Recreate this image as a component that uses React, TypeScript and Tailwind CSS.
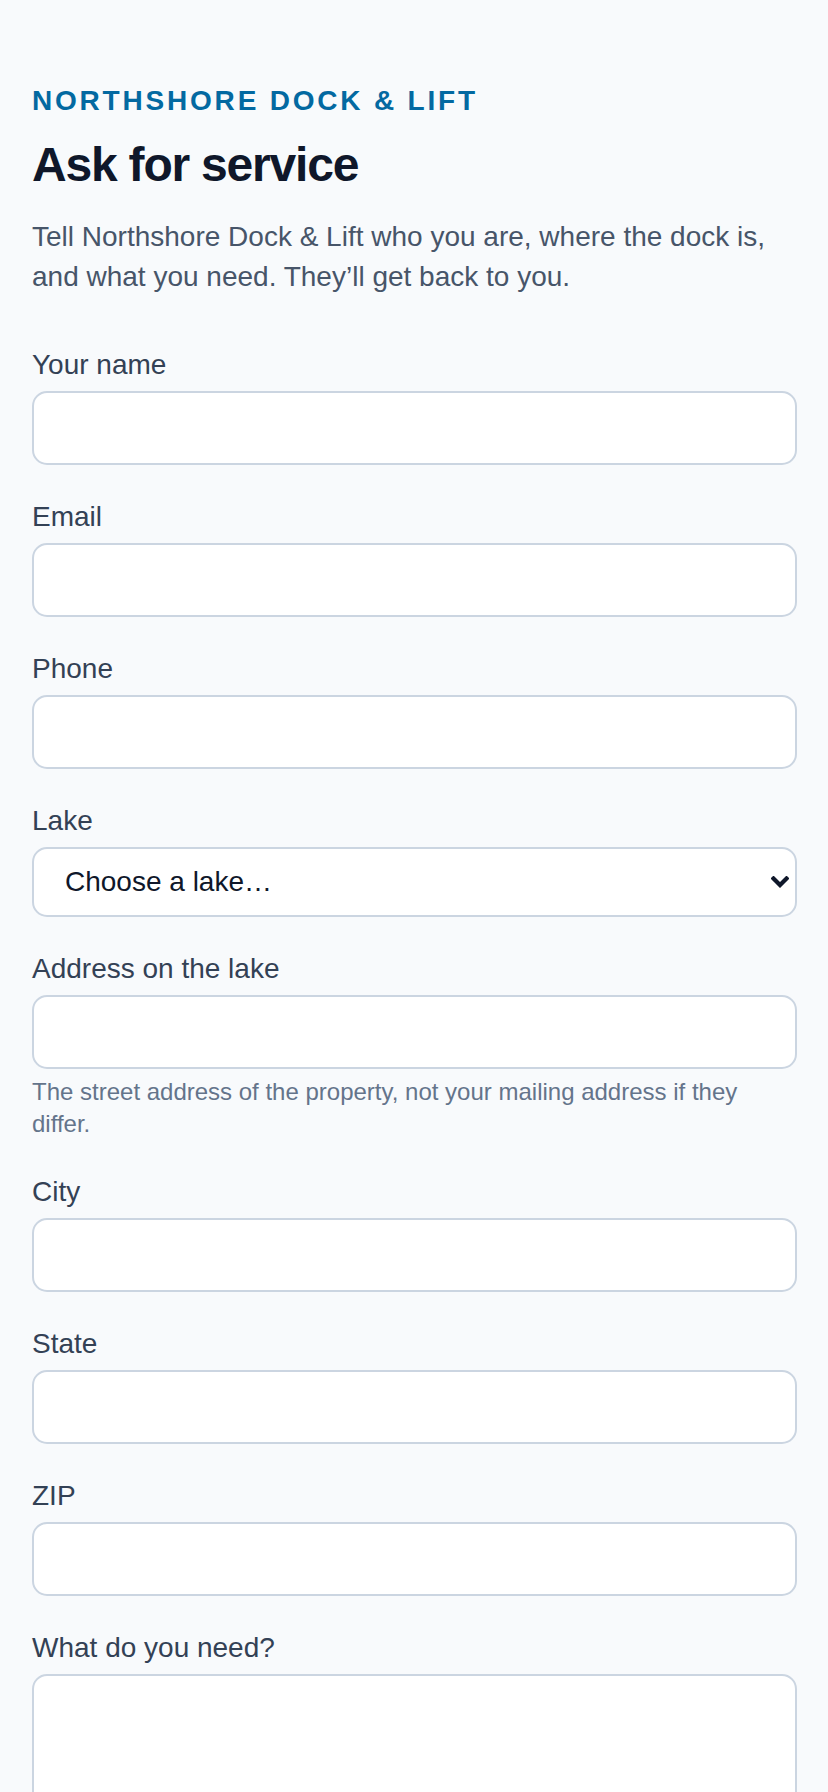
import React from "react";

const font = { fontFamily: '"Liberation Sans", Arial, Helvetica, sans-serif' };

function Field({ label, children }: { label: string; children: React.ReactNode }) {
  return (
    <div className="flex flex-col">
      <label className="text-[28px] leading-[40px] text-[#334155]">{label}</label>
      <div className="mt-[6px]">{children}</div>
    </div>
  );
}

const inputCls =
  "block w-full h-[74px] rounded-[15px] border-2 border-[#cbd5e1] bg-white px-[24px] text-[28px] text-[#0f172a] outline-none";

export default function App() {
  return (
    <div className="min-h-screen w-full bg-[#f8fafc]" style={font}>
      <div className="pl-[32px] pr-[31px] pt-[81px] pb-[80px]">
        <div className="text-[28px] leading-[40px] font-bold uppercase tracking-[0.1em] text-[#0369a1]">
          Northshore Dock &amp; Lift
        </div>
        <h1 className="mt-[12px] text-[48px] leading-[64px] font-bold tracking-[-0.025em] text-[#0f172a]">
          Ask for service
        </h1>
        <p className="mt-[20px] text-[28px] leading-[40px] text-[#475569]">
          Tell Northshore Dock &amp; Lift who you are, where the dock is, and what you need. They’ll get back to you.
        </p>

        <form className="mt-[48px] flex flex-col gap-[32px]">
          <Field label="Your name">
            <input type="text" className={inputCls} />
          </Field>
          <Field label="Email">
            <input type="email" className={inputCls} />
          </Field>
          <Field label="Phone">
            <input type="tel" className={inputCls} />
          </Field>
          <Field label="Lake">
            <div className="relative">
              <select
                defaultValue=""
                className="block w-full h-[70px] appearance-none rounded-[15px] border-2 border-[#cbd5e1] bg-white pl-[31px] pr-[40px] text-[28px] text-[#0f172a] outline-none"
                style={font}
              >
                <option value="">Choose a lake…</option>
                <option>Lake Minnetonka</option>
                <option>White Bear Lake</option>
              </select>
              <svg
                className="pointer-events-none absolute right-[8px] top-[29px]"
                width="18"
                height="12"
                viewBox="0 0 18 12"
              >
                <polyline
                  points="2.5,2.5 9,9 15.5,2.5"
                  fill="none"
                  stroke="#0f172a"
                  strokeWidth="4.2"
                  strokeLinecap="square"
                  strokeLinejoin="miter"
                />
              </svg>
            </div>
          </Field>
          <div className="flex flex-col">
            <label className="text-[28px] leading-[40px] text-[#334155]">Address on the lake</label>
            <input type="text" className={"mt-[6px] " + inputCls} />
            <p className="mt-[7px] text-[24px] leading-[32px] text-[#64748b]">
              The street address of the property, not your mailing address if they differ.
            </p>
          </div>
          <Field label="City">
            <input type="text" className={inputCls} />
          </Field>
          <Field label="State">
            <input type="text" className={inputCls} />
          </Field>
          <Field label="ZIP">
            <input type="text" className={inputCls} />
          </Field>
          <Field label="What do you need?">
            <textarea
              rows={5}
              className="block w-full h-[256px] resize-y rounded-[15px] border-2 border-[#cbd5e1] bg-white px-[24px] py-[16px] text-[28px] text-[#0f172a] outline-none"
              style={font}
            />
          </Field>
        </form>
      </div>
    </div>
  );
}
